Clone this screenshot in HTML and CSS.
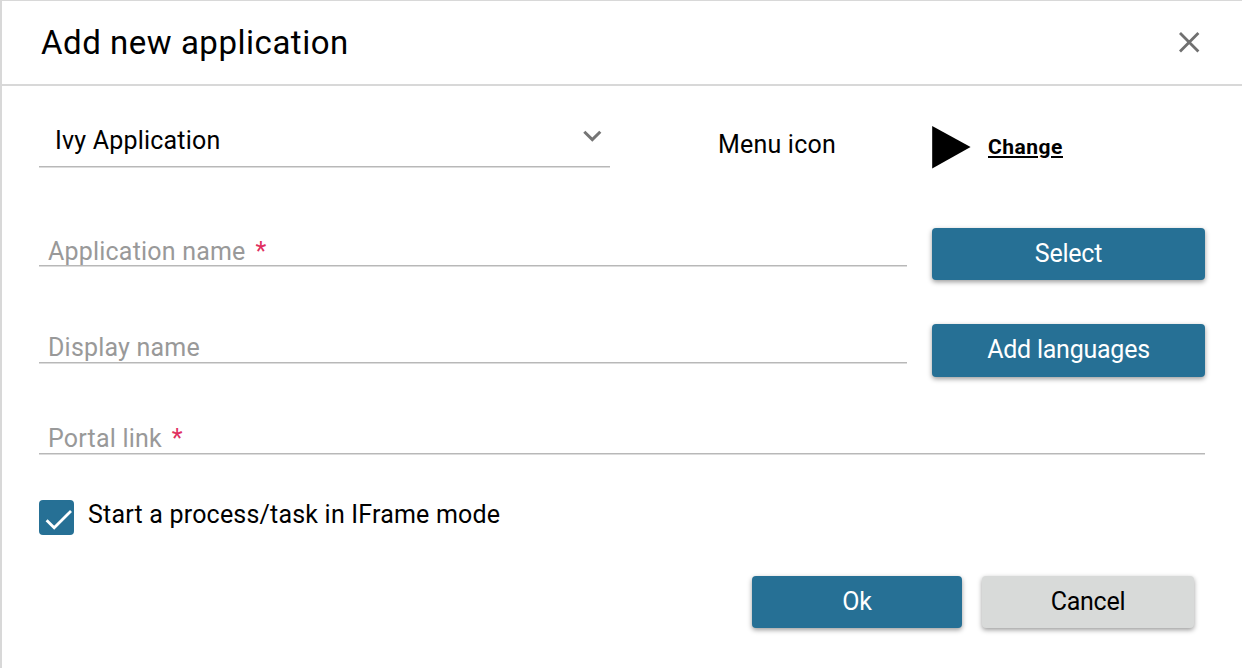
FILE: index.html
```
<!DOCTYPE html>
<html lang="en">
<head>
<meta charset="utf-8">
<title>Add new application</title>
<link rel="stylesheet" href="styles.css">
</head>
<body>
<div class="dialog">
  <header class="dialog-header">
    <h1 class="dialog-title">Add new application</h1>
    <svg class="close-icon" width="22" height="22" viewBox="0 0 22 22"><path d="M2 2L20.4 20.4M20.4 2L2 20.4"/></svg>
  </header>
  <main class="dialog-body">
    <div class="row row-type">
      <div class="select">
        <span class="select-label">Ivy Application</span>
        <svg class="chevron" width="20" height="12" viewBox="0 0 20 12"><path d="M2.3 1.8L10.3 9.6L18.3 1.8"/></svg>
      </div>
      <span class="menu-label">Menu icon</span>
      <svg class="play" width="40" height="44" viewBox="0 0 40 44"><path d="M0.2 1L38.6 22L0.2 43.4Z"/></svg>
      <a class="change">Change</a>
    </div>
    <div class="row row-app">
      <div class="field"><span class="app-label">Application name</span><span class="required">*</span></div>
      <button class="btn btn-side">Select</button>
    </div>
    <div class="row row-display">
      <div class="field"><span class="display-label">Display name</span></div>
      <button class="btn btn-side btn-lang">Add languages</button>
    </div>
    <div class="row row-link">
      <div class="field"><span class="link-label">Portal link</span><span class="required">*</span></div>
    </div>
    <div class="row row-check">
      <span class="checkbox"><svg width="35" height="35" viewBox="0 0 35 35"><path d="M7.6 20.2L15.2 27.8L32 11"/></svg></span>
      <span class="check-label">Start a process/task in IFrame mode</span>
    </div>
  </main>
  <footer class="dialog-footer">
    <button class="btn btn-ok">Ok</button>
    <button class="btn btn-cancel">Cancel</button>
  </footer>
</div>
</body>
</html>
```
FILE: styles.css
```
* { box-sizing: border-box; }
body { margin: 0; background: #fff; overflow: hidden; }
.dialog {
  height: 668px;
  border-top: 1px solid #d8d8d8;
  border-left: 2px solid #d8d8d8;
  font: 400 25px/30px Roboto, sans-serif;
  letter-spacing: 0.2px;
  color: #000;
  white-space: nowrap;
}
.dialog-header {
  display: flex;
  justify-content: space-between;
  height: 85px;
  padding: 20px 42px 0 39px;
  border-bottom: 2px solid #d8d8d8;
}
.dialog-title { margin: 0; font-size: 33px; font-weight: 400; line-height: 44px; letter-spacing: 0.53px; }
.close-icon { margin-top: 10px; fill: none; stroke: #707070; stroke-width: 2.8; }
.dialog-body { padding: 30px 37px 0; }
.row { display: flex; }
.row-type { height: 52px; align-items: flex-start; }
.select {
  display: flex;
  justify-content: space-between;
  width: 571px;
  height: 51px;
  padding: 10px 8px 0 16px;
  border-bottom: 1px solid #b8b8b8;
  box-shadow: 0 1px #dcdcdc;
}
.chevron { margin-top: 4px; fill: none; stroke: #757575; stroke-width: 3; }
.menu-label { width: 214px; margin: 14px 0 0 108px; }
.play { margin-top: 9px; }
.change { margin: 16px 0 0 16px; font-size: 21px; font-weight: 700; text-decoration: underline; letter-spacing: 0.52px; }
.row-app { height: 52px; margin-top: 60px; justify-content: space-between; }
.row-display { height: 53px; margin-top: 44px; justify-content: space-between; }
.row-link { height: 39px; margin-top: 38px; }
.field {
  display: flex;
  align-items: flex-start;
  width: 868px;
  height: 39px;
  padding: 9px 0 0 9px;
  border-bottom: 1px solid #b8b8b8;
  box-shadow: 0 1px #dcdcdc;
  color: #999;
}
.row-app .field { height: 38px; }
.row-link .field { width: 1166px; }
.required { margin-left: 10px; color: #e0305f; }
.btn {
  height: 52px;
  padding: 0;
  border: 0;
  border-radius: 4px;
  background: #267095;
  color: #fff;
  font: inherit;
  letter-spacing: -0.24px;
  box-shadow: 0 2px 5px rgba(0, 0, 0, 0.4);
}
.btn-side { width: 273px; }
.btn-lang { height: 53px; padding-bottom: 2px; }
.row-check { height: 35px; margin-top: 46px; }
.checkbox { width: 35px; height: 35px; border-radius: 4px; background: #267095; }
.checkbox svg { display: block; fill: none; stroke: #fff; stroke-width: 2.8; }
.check-label { margin: 0 0 0 14px; }
.dialog-footer { display: flex; gap: 20px; justify-content: flex-end; padding: 41px 48px 0 0; }
.btn-ok { width: 210px; }
.btn-cancel { width: 212px; background: #d8dad9; color: #000; }
```
